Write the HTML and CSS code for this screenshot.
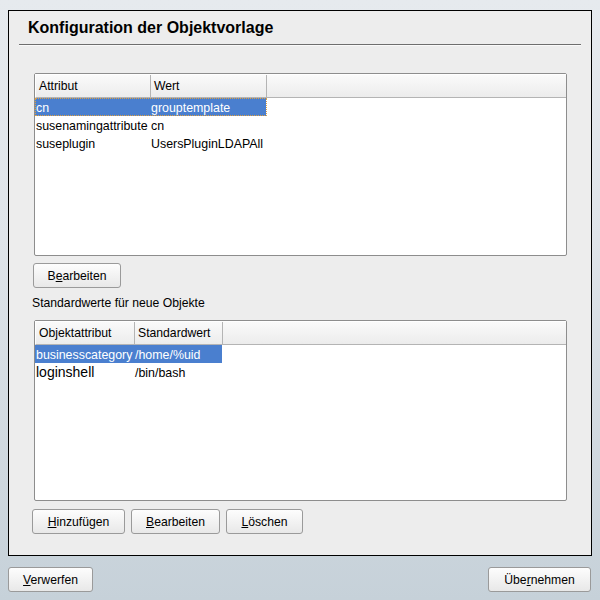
FILE: index.html
```html
<!DOCTYPE html>
<html>
<head>
<meta charset="utf-8">
<link rel="stylesheet" href="styles.css">
</head>
<body>
<div class="screen">
  <div class="panel">
    <h1 class="title">Konfiguration der Objektvorlage</h1>
    <div class="rule"></div>
    <div class="content">
      <div class="table table-top">
        <div class="thead">
          <div class="th c1">Attribut</div>
          <div class="th c2">Wert</div>
          <div class="th fill"></div>
        </div>
        <div class="row selected focus">
          <div class="td c1">cn</div>
          <div class="td c2">grouptemplate</div>
        </div>
        <div class="row">
          <div class="td c1">susenamingattribute</div>
          <div class="td c2">cn</div>
        </div>
        <div class="row">
          <div class="td c1">suseplugin</div>
          <div class="td c2">UsersPluginLDAPAll</div>
        </div>
      </div>
      <div class="btnrow first">
        <button class="btn b-edit1">B<u>e</u>arbeiten</button>
      </div>
      <div class="label">Standardwerte für neue Objekte</div>
      <div class="table table-bottom">
        <div class="thead">
          <div class="th d1">Objektattribut</div>
          <div class="th d2">Standardwert</div>
          <div class="th fill"></div>
        </div>
        <div class="row selected">
          <div class="td d1">businesscategory</div>
          <div class="td d2">/home/%uid</div>
        </div>
        <div class="row">
          <div class="td d1 big">loginshell</div>
          <div class="td d2">/bin/bash</div>
        </div>
      </div>
      <div class="btnrow second">
        <button class="btn b-add"><u>H</u>inzufügen</button>
        <button class="btn b-edit2"><u>B</u>earbeiten</button>
        <button class="btn b-del"><u>L</u>öschen</button>
      </div>
    </div>
  </div>
  <div class="footer">
    <button class="btn b-discard"><u>V</u>erwerfen</button>
    <button class="btn b-apply">Übe<u>r</u>nehmen</button>
  </div>
</div>
</body>
</html>
```

FILE: styles.css
```css
html, body {
  margin: 0;
  padding: 0;
}
body {
  width: 600px;
  height: 600px;
  overflow: hidden;
  font-family: "Liberation Sans", sans-serif;
  font-size: 12.2px;
  color: #000;
}
.screen {
  width: 600px;
  height: 600px;
  background: linear-gradient(#e6eaee 0%, #dfe4e9 40%, #c6d1d9 100%);
  display: flex;
  flex-direction: column;
  padding-top: 10px;
  box-sizing: border-box;
}
.panel {
  margin: 0 8px;
  height: 546px;
  box-sizing: border-box;
  border: 1px solid #000;
  background: #ededed;
  display: flex;
  flex-direction: column;
}
.title {
  margin: 0;
  padding: 5px 0 0 19px;
  height: 28px;
  font-family: "Liberation Sans", sans-serif;
  font-size: 16px;
  font-weight: bold;
  line-height: 22px;
  transform: scaleY(1.06);
  transform-origin: left top;
}
.rule {
  height: 1px;
  background: #6e6e6e;
  margin: 0 10px 0 10px;
  box-shadow: 0 1px 0 #fafafa;
}
.content {
  padding: 28px 24px 0 25px;
  display: flex;
  flex-direction: column;
}
.table {
  background: #fff;
  border: 1px solid #8d8d8d;
  border-radius: 2px;
  box-sizing: border-box;
}
.table-top { height: 183px; }
.table-bottom { height: 181px; }
.thead {
  display: flex;
  height: 24px;
  box-sizing: border-box;
  background: linear-gradient(#fafafa, #ececec);
  border-bottom: 1px solid #b4b4b4;
  border-top: 1px solid #fff;
  border-left: 1px solid #fff;
}
.th {
  box-sizing: border-box;
  border-right: 1px solid #b4b4b4;
  padding: 4px 0 0 3px;
}
.th.fill { flex: 1; border-right: none; }
.c1 { width: 115px; }
.c2 { width: 116px; }
.d1 { width: 99px; }
.d2 { width: 88px; }
.row {
  display: flex;
  height: 18px;
  box-sizing: border-box;
  line-height: 18px;
  padding-top: 1px;
  font-size: 12.4px;
}
.td {
  box-sizing: border-box;
  padding-left: 1px;
  white-space: nowrap;
  height: 17px;
}
.row.selected {
  padding-top: 0;
}
.row.selected .td {
  background: #4a7fcf;
  color: #fff;
  height: 18px;
  line-height: 20px;
}
.row.focus {
  width: 232px;
  outline: 1px dotted #e0a040;
  outline-offset: -1px;
}
.td.big { font-size: 14px; line-height: 17px; }
.btnrow {
  display: flex;
  gap: 6px;
}
.btnrow.first { padding: 7px 0 0 0; margin-left: -1px; }
.btnrow.second { padding: 8px 0 0 0; margin-left: -2px; }
.btn {
  flex: none;
  height: 25px;
  box-sizing: border-box;
  border: 1px solid #9a9a9a;
  border-radius: 3px;
  background: linear-gradient(#fdfdfd, #e8e8e8);
  font-family: "Liberation Sans", sans-serif;
  font-size: 12.2px;
  color: #000;
  padding: 0;
  margin: 0;
}
.b-edit1 { width: 88px; }
.b-add { width: 93px; }
.b-edit2 { width: 89px; }
.b-del { width: 77px; }
.label {
  padding: 8px 0 0 0;
  height: 32px;
  box-sizing: border-box;
  margin-left: -2px;
}
.footer {
  display: flex;
  justify-content: space-between;
  padding: 11px 9px 0 8px;
}
.b-discard { width: 85px; }
.b-apply { width: 103px; }
```
